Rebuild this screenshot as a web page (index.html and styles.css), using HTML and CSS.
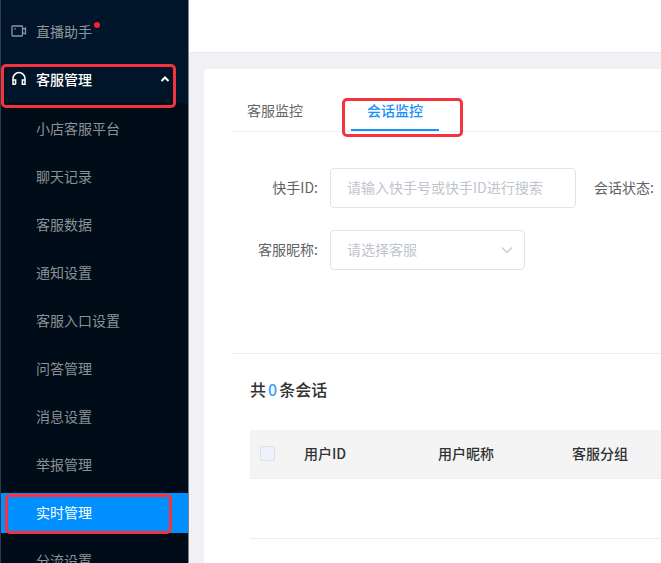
FILE: index.html
```html
<!DOCTYPE html>
<html lang="zh-CN">
<head>
    <meta charset="UTF-8">
    <meta name="viewport" content="width=device-width, initial-scale=1.0">
    <title>实时管理</title>
    <link rel="stylesheet" href="styles.css">
</head>
<body>
    <div class="layout">
        <nav class="sidebar">
            <a class="menu-item" href="#">
                <svg class="menu-icon" viewBox="0 0 16 16" fill="none" stroke="currentColor" stroke-width="1.3">
                    <rect x="1" y="3" width="10.5" height="10" rx="0.8"/>
                    <path d="M11.5 6.2l3-1v5.6l-3-1M3.3 5.8h1.6"/>
                </svg>
                <span>直播助手</span>
                <i class="dot"></i>
            </a>
            <button class="menu-item open" type="button">
                <svg class="menu-icon" viewBox="0 0 16 16" fill="none" stroke="currentColor" stroke-width="1.5">
                    <path d="M4.6 13.2H2V7.6a6 6 0 0 1 12 0v5.6h-2.6V9H14M2 9h2.6v4.2"/>
                </svg>
                <span>客服管理</span>
                <svg class="menu-arrow" viewBox="0 0 10 8" fill="none" stroke="currentColor" stroke-width="2">
                    <path d="M1.5 6L5 2.5 8.5 6"/>
                </svg>
                <span class="mark mark-group"></span>
            </button>
            <div class="submenu">
                <a class="sub-item" href="#">小店客服平台</a>
                <a class="sub-item" href="#">聊天记录</a>
                <a class="sub-item" href="#">客服数据</a>
                <a class="sub-item" href="#">通知设置</a>
                <a class="sub-item" href="#">客服入口设置</a>
                <a class="sub-item" href="#">问答管理</a>
                <a class="sub-item" href="#">消息设置</a>
                <a class="sub-item" href="#">举报管理</a>
                <a class="sub-item active" href="#">实时管理<span class="mark mark-item"></span></a>
                <a class="sub-item" href="#">分流设置</a>
            </div>
        </nav>

        <div class="main">
            <header class="topbar"></header>
            <main class="card">
                <div class="tabs">
                    <button class="tab" type="button">客服监控</button>
                    <button class="tab active" type="button">会话监控<span class="mark mark-tab"></span></button>
                </div>

                <form class="filters">
                    <div class="row">
                        <label for="userId">快手ID:</label>
                        <input id="userId" type="text" placeholder="请输入快手号或快手ID进行搜索">
                        <label for="status">会话状态:</label>
                        <div class="select">
                            <select id="status"><option>全部</option></select>
                        </div>
                    </div>
                    <div class="row">
                        <label for="agent">客服昵称:</label>
                        <div class="select">
                            <select id="agent"><option>请选择客服</option></select>
                            <svg viewBox="0 0 12 8" fill="none" stroke="currentColor" stroke-width="1.2">
                                <path d="M1 1.5l5 5 5-5"/>
                            </svg>
                        </div>
                    </div>
                </form>

                <section class="result">
                    <h2>共<em>0</em>条会话</h2>
                    <table>
                        <thead>
                            <tr>
                                <th class="check"><input type="checkbox" aria-label="全选"></th>
                                <th class="col">用户ID</th>
                                <th class="col">用户昵称</th>
                                <th>客服分组</th>
                            </tr>
                        </thead>
                        <tbody>
                            <tr><td colspan="4"></td></tr>
                        </tbody>
                    </table>
                </section>
            </main>
        </div>
    </div>
</body>
</html>
```

FILE: styles.css
```css
* {
    box-sizing: border-box;
}

body {
    margin: 0;
    font-family: "Noto Sans CJK SC", sans-serif;
    font-size: 14px;
    line-height: 20px;
    color: #606266;
    background: #f0f1f5;
}

button, input, select {
    font: inherit;
}

.layout {
    display: flex;
    height: 100vh;
    overflow: hidden;
}

/* Sidebar */
.sidebar {
    flex: 0 0 189px;
    padding-top: 12px;
    overflow: hidden;
    background: #001529;
    border-left: 1px solid #303d49;
    border-right: 1px solid #7d858c;
}

.menu-item {
    position: relative;
    display: flex;
    align-items: center;
    width: 100%;
    height: 40px;
    margin-bottom: 8px;
    padding: 0 18px 2px 10px;
    border: none;
    background: none;
    color: #8d959e;
    text-decoration: none;
    cursor: pointer;
}

.menu-item.open {
    margin-bottom: 3px;
    color: #fff;
    font-weight: 500;
}

.menu-icon {
    width: 16px;
    height: 16px;
    margin-right: 9px;
}

.menu-arrow {
    width: 10px;
    height: 8px;
    margin-left: auto;
}

.dot {
    width: 6px;
    height: 6px;
    margin: 0 0 12px 2px;
    border-radius: 50%;
    background: #f5222d;
}

.submenu {
    padding-top: 6px;
    background: #000c17;
}

.sub-item {
    position: relative;
    display: block;
    margin-bottom: 8px;
    padding: 9px 0 11px 35px;
    color: #8c9197;
    text-decoration: none;
}

.sub-item.active {
    background: #0090ff;
    color: #fff;
}

/* Red highlight frames */
.mark {
    position: absolute;
    border: 3px solid #f5333f;
    border-radius: 5px;
    pointer-events: none;
}

.mark-group {
    inset: 4px 12px -8px 0;
}

.mark-item {
    inset: 1px 16px -1px 4px;
}

.mark-tab {
    inset: -1px -24px -8px -9px;
}

/* Content */
.main {
    flex: 1;
    min-width: 0;
    display: flex;
    flex-direction: column;
}

.topbar {
    flex: 0 0 53px;
    background: #fff;
    border-bottom: 1px solid #e8e9ec;
}

.card {
    flex: 1;
    margin: 16px 0 0 15px;
    overflow: hidden;
    background: #fff;
    border-radius: 4px 0 0 0;
}

.tabs {
    display: flex;
    gap: 32px;
    margin: 30px 0 0 27px;
    border-bottom: 1px solid #eceef1;
}

.tab {
    position: relative;
    height: 32px;
    padding: 0 16px 8px;
    border: none;
    border-bottom: 2px solid transparent;
    background: none;
    color: #666;
    cursor: pointer;
}

.tab.active {
    border-bottom-color: #1890ff;
    color: #1890ff;
    font-weight: 500;
}

.filters {
    display: flex;
    flex-direction: column;
    gap: 22px;
    margin-left: 27px;
    padding: 36px 0 83px;
    border-bottom: 1px solid #eceef4;
}

.row {
    display: flex;
    align-items: center;
}

.row label {
    flex: none;
    width: 87px;
    margin-right: 12px;
    padding-bottom: 2px;
    text-align: right;
}

.row input,
.select {
    flex: none;
}

.row input + label {
    width: 78px;
}

.row input,
.row select {
    display: block;
    height: 40px;
    padding: 0 16px 2px;
    border: 1px solid #dfe2ea;
    border-radius: 4px;
    background: #fff;
    color: #c0c4cc;
    outline: none;
}

.row input {
    width: 246px;
}

.row input::placeholder {
    color: #c0c4cc;
}

.select {
    position: relative;
    width: 195px;
}

.row select {
    width: 100%;
    appearance: none;
}

.select svg {
    position: absolute;
    right: 12px;
    top: 16px;
    width: 12px;
    height: 8px;
    color: #c0c4cc;
    pointer-events: none;
}

.result {
    padding: 23px 0 0 46px;
}

.result h2 {
    margin: 0 0 29px;
    font-size: 16px;
    line-height: 24px;
    font-weight: 500;
    color: #303133;
}

.result em {
    margin: 0 2px;
    font-style: normal;
    color: #409eff;
}

table {
    width: 100%;
    border-collapse: collapse;
    table-layout: fixed;
}

th {
    height: 48px;
    padding: 0 16px 2px;
    border-bottom: 1px solid #ebeef5;
    background: #f4f4f4;
    color: #303133;
    font-weight: 500;
    text-align: left;
    white-space: nowrap;
}

th.check {
    width: 38px;
    padding: 0 10px;
}

th.col {
    width: 134px;
}

th input {
    display: block;
    appearance: none;
    width: 15px;
    height: 15px;
    margin: 0;
    border: 1px solid #dcdfe6;
    border-radius: 2px;
    background: #edf2fc;
}

td {
    height: 60px;
    padding: 0;
    border-bottom: 1px solid #ebeef5;
}
```
